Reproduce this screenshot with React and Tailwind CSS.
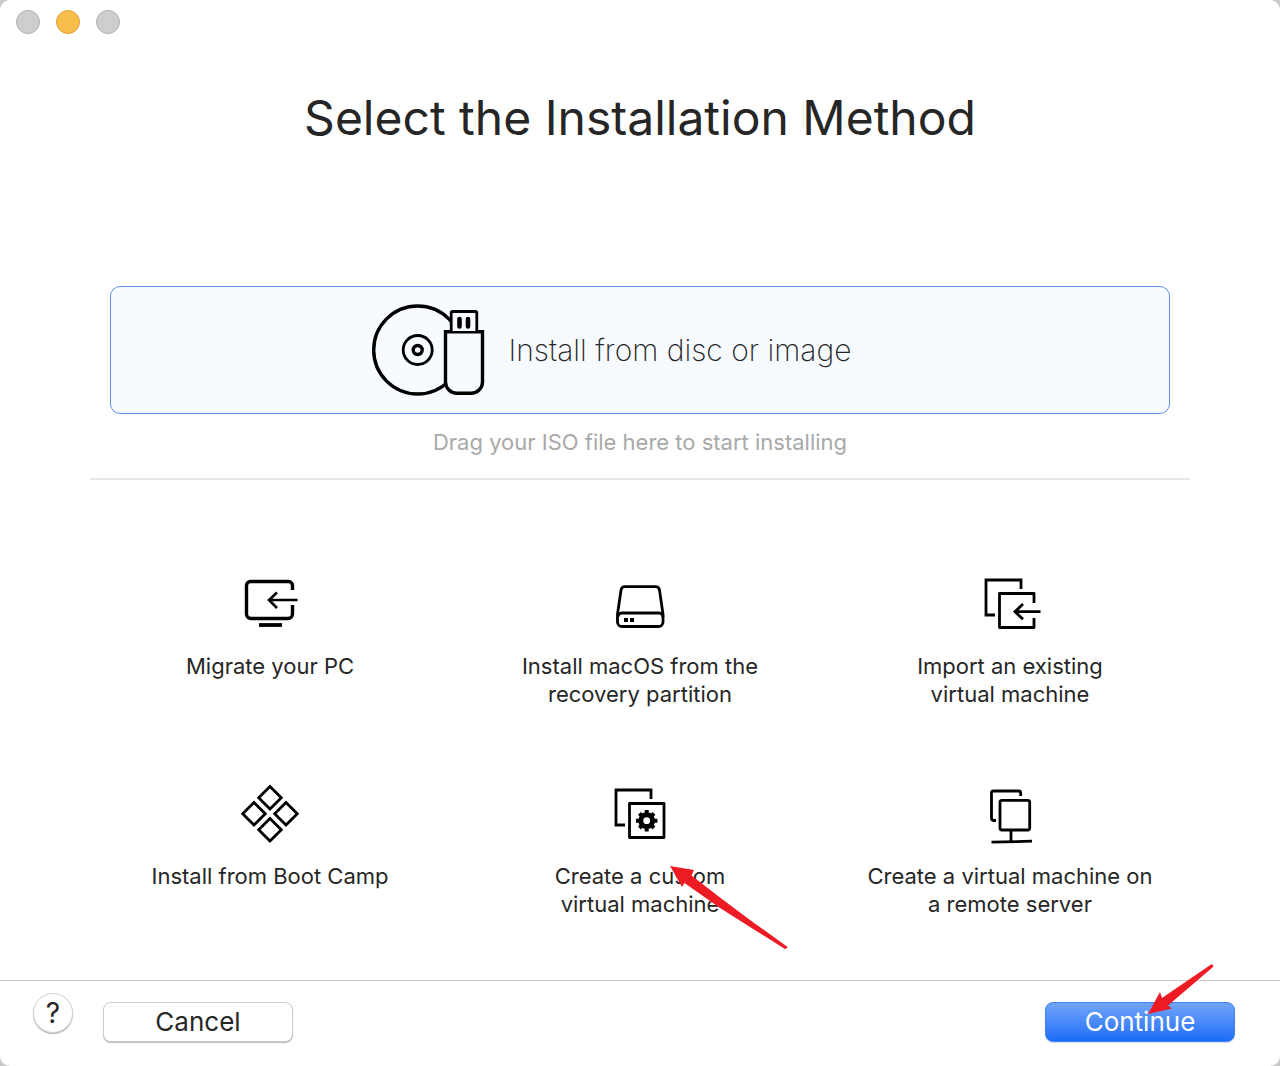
const stroke = { fill: "none", stroke: "#000", strokeWidth: 2.8 };

function Icon({ children }) {
  return (
    <svg viewBox="0 0 80 75" className="h-[75px] w-20 shrink-0" aria-hidden="true">
      {children}
    </svg>
  );
}

function MigrateIcon() {
  return (
    <Icon>
      <g {...stroke} strokeWidth="3.400">
        <path d="M62.500 25V20.500a4 4 0 0 0-4-4H20.500a4 4 0 0 0-4 4V49a4.500 4.500 0 0 0 4.500 4.500H58A4.500 4.500 0 0 0 62.500 49V40" />
        <path d="M29 60H52" strokeWidth="3.800" />
        <path d="M67.500 35H39M47 27.500 39 35l8 8" strokeWidth="2.600" />
      </g>
    </Icon>
  );
}

function DriveIcon() {
  return (
    <Icon>
      <g {...stroke}>
        <path d="M25 21.700H55.500a4 4 0 0 1 4 3.500L63 49V57a4.500 4.500 0 0 1-4.500 4.500H22A4.500 4.500 0 0 1 17.500 57V49L21 25.200a4 4 0 0 1 4-3.500Z" />
        <path d="M18 52a4 4 0 0 1 4-4H59a4 4 0 0 1 4 4" />
      </g>
      <path d="M24 53h4v4h-4zM30 53h4v4h-4z" />
    </Icon>
  );
}

function ImportIcon() {
  return (
    <Icon>
      <g {...stroke}>
        <path d="M51 24V15H16V50H25" />
        <path d="M64 38V28.500H29.500V62.500H64V53" strokeLinejoin="round" />
        <path d="M70.500 46.700H45M53 39l-8 7.700 8 7.500" />
      </g>
    </Icon>
  );
}

function BootCampIcon() {
  return (
    <Icon>
      <g {...stroke}>
        <path d="M40 11.500 51.300 22.800 40 34.100 28.700 22.800Z" />
        <path d="M24 27.500 35.300 38.800 24 50.100 12.700 38.800Z" />
        <path d="M56 27.500 67.300 38.800 56 50.100 44.700 38.800Z" />
        <path d="M40 43.500 51.300 54.800 40 66.100 28.700 54.800Z" />
      </g>
    </Icon>
  );
}

function CustomIcon() {
  return (
    <Icon>
      <g {...stroke}>
        <path d="M51 24V15H16V50H25" />
        <path d="M29.500 28.500H64V62.500H29.500Z" strokeLinejoin="round" />
        <circle cx="46.700" cy="45.700" r="5.900" strokeWidth="5" />
        <g strokeWidth="4">
          <path d="M46.700 39V35M46.700 52.400V56.400M40 45.700H36M53.400 45.700H57.400" />
          <path d="M42 41 39.400 38.400M51.400 41 54 38.400M42 50.400 39.400 53M51.400 50.400 54 53" />
        </g>
      </g>
    </Icon>
  );
}

function RemoteIcon() {
  return (
    <Icon>
      <g {...stroke}>
        <path d="M50.700 21V18a2 2 0 0 0-2-2H23.500a2 2 0 0 0-2 2V43a2.500 2.500 0 0 0 2.500 2.500H26" />
        <rect x="30" y="25.300" width="29.700" height="29.700" rx="2" />
        <path d="M41 55V67M21.500 67.200 62 66.200" />
      </g>
    </Icon>
  );
}

function DiscIcon() {
  return (
    <svg viewBox="0 0 140 120" className="h-[120px] w-[140px] shrink-0" aria-hidden="true">
      <g fill="none" stroke="#000" strokeWidth="3.400">
        <circle cx="56.700" cy="60" r="44" />
        <circle cx="56.700" cy="60" r="14.500" strokeWidth="2.800" />
        <circle cx="56.700" cy="60" r="4.500" />
        <path
          fill="#f7faff"
          d="M84.500 41.700H121.500V92A11.500 11.500 0 0 1 110 103.300H96A11.500 11.500 0 0 1 84.500 92Z"
        />
        <path fill="#f7faff" strokeWidth="2.800" d="M90.200 41V23a1.500 1.500 0 0 1 1.500-1.500H114.300a1.500 1.500 0 0 1 1.500 1.500V41" />
        <path strokeWidth="4.600" strokeLinecap="round" d="M98.500 29V36.500M107 29V36.500" />
      </g>
    </svg>
  );
}

const methods = [
  { lines: ["Migrate your PC"], icon: MigrateIcon },
  { lines: ["Install macOS from the", "recovery partition"], icon: DriveIcon },
  { lines: ["Import an existing", "virtual machine"], icon: ImportIcon },
  { lines: ["Install from Boot Camp"], icon: BootCampIcon },
  { lines: ["Create a custom", "virtual machine"], icon: CustomIcon, marked: true },
  { lines: ["Create a virtual machine on", "a remote server"], icon: RemoteIcon },
];

function Method({ lines, icon: Glyph, marked }) {
  return (
    <button type="button" className="relative flex flex-col items-center">
      <Glyph />
      <span className="mt-3 text-[22px] leading-7">
        {lines.map((line) => (
          <span key={line} className="block whitespace-nowrap">
            {line}
          </span>
        ))}
      </span>
      {marked && (
        <svg
          viewBox="0 0 150 110"
          className="pointer-events-none absolute top-[75px] left-1/2 ml-2.5 h-[110px] w-[150px]"
          aria-hidden="true"
        >
          <path
            fill="#ed1c24"
            d="M20 16 44 20 41.500 25.500 70 47.500 100 70 137 96.500Q138 99 135 99L100 77 70 58 34.500 33 32 37Z"
          />
        </svg>
      )}
    </button>
  );
}

export default function App() {
  return (
    <div className="min-h-screen bg-[#c9c9c9] font-['Inter','Liberation_Sans',sans-serif] text-[#262626]">
      <div className="flex min-h-screen flex-col rounded-[10px] bg-white">
        <header className="flex h-11 gap-4 px-4 pt-2.5">
          <button type="button" aria-label="Close" className="size-6 rounded-full border border-[#b1b1b1] bg-[#cecece]" />
          <button type="button" aria-label="Minimize" className="size-6 rounded-full border border-[#dea03a] bg-[#f8bd4a]" />
          <button type="button" aria-label="Zoom" className="size-6 rounded-full border border-[#b1b1b1] bg-[#cecece]" />
        </header>

        <main className="flex-1">
          <h1 className="mt-11 text-center text-[48px] leading-[60px] font-normal">
            Select the Installation Method
          </h1>

          <section className="mx-[90px] mt-[138px] border-b-2 border-[#e6e6e6] px-5 pb-[22px]">
            <button
              type="button"
              className="flex h-32 w-full items-center justify-center gap-2 rounded-[10px] border border-[#5b93ea] bg-[#f7faff] pr-[68px]"
            >
              <DiscIcon />
              <span className="text-[30px] font-extralight whitespace-nowrap">Install from disc or image</span>
            </button>
            <p className="mt-3.5 text-center text-[22px] leading-7 text-[#a9a9a9]">
              Drag your ISO file here to start installing
            </p>
          </section>

          <section className="mx-[85px] mt-[85px] mb-10 grid auto-rows-[143px] grid-cols-3 items-start gap-y-[67px]">
            {methods.map((method) => (
              <Method key={method.lines[0]} {...method} />
            ))}
          </section>
        </main>

        <footer className="flex h-[86px] items-start border-t border-[#c8c8c8] pr-[45px] pl-[33px]">
          <button
            type="button"
            aria-label="Help"
            className="mt-3 size-10 rounded-full border border-[#d2d2d2] bg-white text-[28px] leading-[38px] shadow-[0_1px_1px_#b5b5b5]"
          >
            ?
          </button>
          <button
            type="button"
            className="mt-[21px] ml-[30px] h-10 w-[190px] rounded-lg border border-[#cfcfcf] bg-white text-[26px] leading-[38px] shadow-[0_1px_1px_#b5b5b5]"
          >
            Cancel
          </button>
          <button
            type="button"
            className="relative mt-[21px] ml-auto h-10 w-[190px] rounded-lg border border-[#3d82ee] bg-linear-to-b from-[#71a5f8] to-[#1a6af8] text-[26px] leading-[38px] text-white shadow-[0_1px_1px_#d5dcec]"
          >
            Continue
            <svg
              viewBox="0 0 74 56"
              className="pointer-events-none absolute -top-[41px] left-[99px] h-14 w-[74px]"
              aria-hidden="true"
            >
              <path fill="#ed1c24" d="M3 52 15 30 17 36 66 2.500Q69 2 68 5L23 43.500 27 46.500Z" />
            </svg>
          </button>
        </footer>
      </div>
    </div>
  );
}
